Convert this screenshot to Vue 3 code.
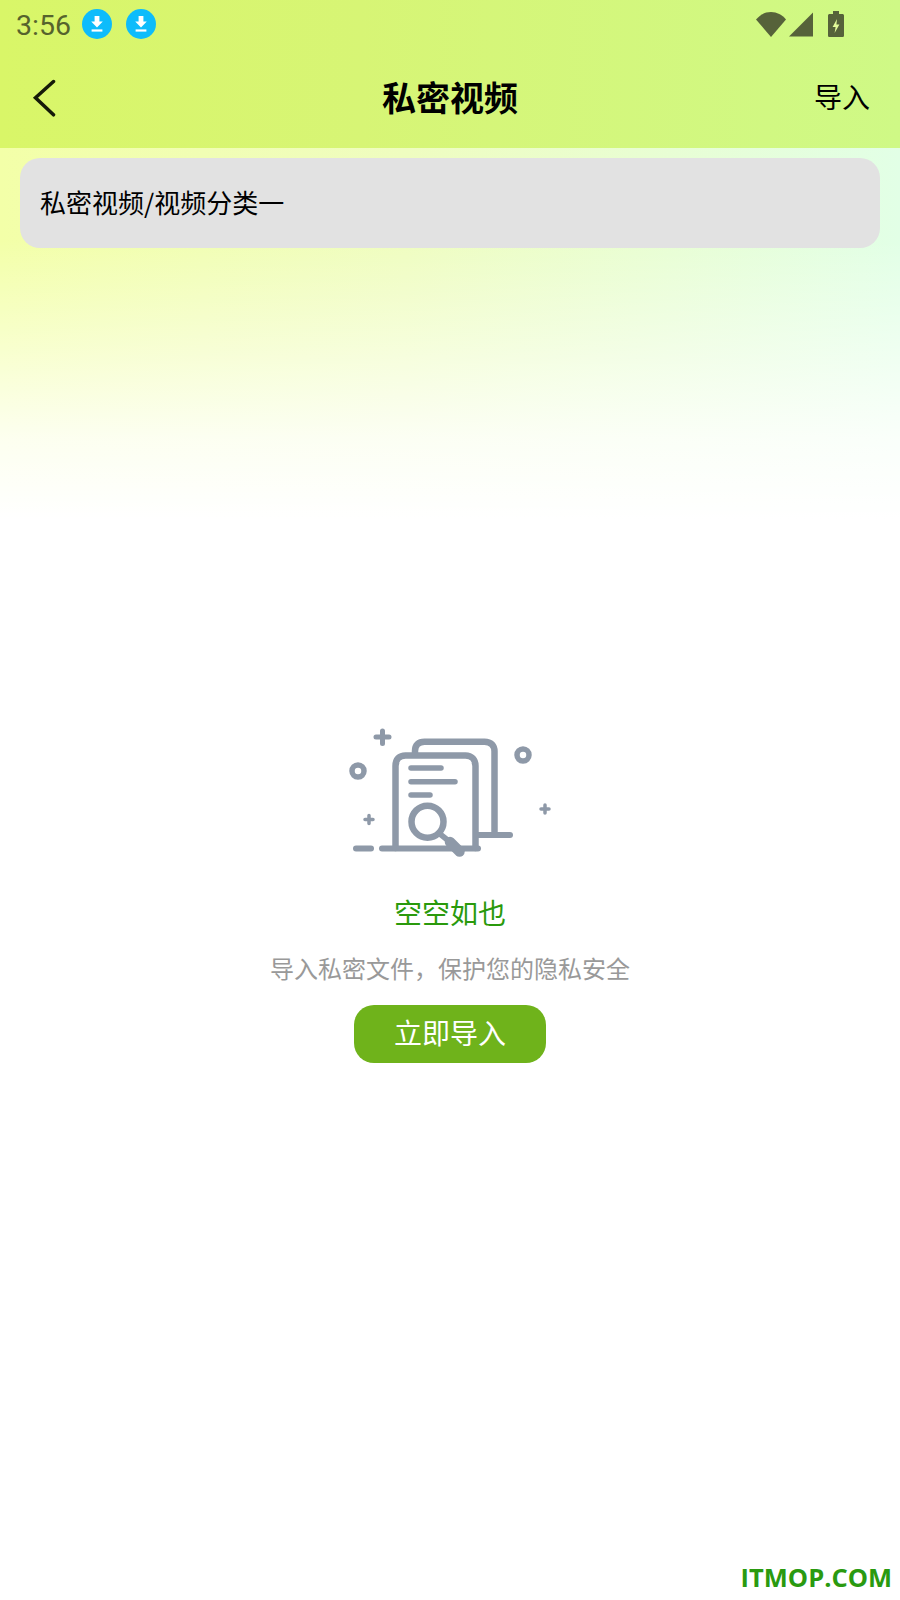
<template>
  <div class="page">
    <header class="app-header">
      <div class="status-bar">
        <span class="time">3:56</span>
        <span v-for="n in 2" :key="n" class="dl-badge">
          <svg width="30" height="30" viewBox="0 0 30 30">
            <circle cx="15" cy="15" r="15" fill="#0dbcfb" />
            <path d="M12.6 7h4.8v5.6h3.4L15 18.4l-5.8-5.8h3.4z" fill="#fff" />
            <rect x="9.6" y="20.4" width="10.8" height="2.2" fill="#fff" />
          </svg>
        </span>
        <div class="status-right">
          <svg width="30" height="25" viewBox="0 0 30 25" class="wifi">
            <path d="M0 7.500C4 2.800 9 0 15 0s11 2.800 15 7.500L15 25z" fill="#56623a" />
          </svg>
          <svg width="24" height="25" viewBox="0 0 24 25" class="signal">
            <path d="M24 0.500V24.500H0z" fill="#56623a" />
          </svg>
          <svg width="16" height="26" viewBox="0 0 16 26" class="battery">
            <path d="M5 0h6v3h3.400c.9 0 1.600.7 1.600 1.600v19.800c0 .9-.7 1.600-1.600 1.600H1.600C.7 26 0 25.300 0 24.400V4.600C0 3.700.7 3 1.600 3H5z" fill="#56623a" />
            <path d="M9 8l-4.400 8h3l-1 6 4.800-8.600H8.400z" fill="#e4fb9a" />
          </svg>
        </div>
      </div>
      <div class="nav-bar">
        <svg class="back" width="26" height="38" viewBox="0 0 26 38">
          <path d="M21.500 2.500L3.500 18.800l18 17" fill="none" stroke="#151a08" stroke-width="3.500" stroke-linecap="round" />
        </svg>
        <h1 class="title">私密视频</h1>
        <a class="import">导入</a>
      </div>
    </header>

    <main class="content">
      <div class="crumb">私密视频/视频分类一</div>

      <section class="empty">
        <svg class="empty-icon" width="220" height="150" viewBox="0 0 220 150">
          <g fill="none" stroke="#8e99a8" stroke-linecap="round" stroke-linejoin="round">
            <path stroke-width="5" d="M36 22h13M42.500 16v12.500" />
            <circle stroke-width="5.500" cx="18" cy="56" r="6" />
            <circle stroke-width="5.500" cx="183" cy="40" r="6" />
            <path stroke-width="3.500" d="M25 104.500h8M29 100.500v8" />
            <path stroke-width="3.500" d="M201 94h8M205 90v8" />
            <path stroke-width="6" d="M16 133.500h15" />
            <path stroke-width="6" d="M42 133.500h96" />
            <path stroke-width="6.500" d="M75 38v-2c0-6 3.500-9.300 9.500-9.300h60c6.500 0 10 3.800 10 9.800v80" />
            <path stroke-width="6" d="M138 120h32" />
            <path stroke-width="6.500" d="M55.500 133V51c0-7 4-10.500 10-10.500h60c6 0 10 4 10 10.500v82" />
            <path stroke-width="5.500" d="M71 53h30" />
            <path stroke-width="5.500" d="M71 66.700h44" />
            <path stroke-width="5.500" d="M71 80h19" />
            <circle stroke-width="6.500" cx="87.500" cy="106.700" r="16" fill="#fff" />
            <path stroke-width="5.500" d="M100 119l10 8" />
            <path stroke-width="10.500" d="M110 127l9.500 9.500" />
          </g>
        </svg>
        <h2 class="empty-title">空空如也</h2>
        <p class="empty-desc">导入私密文件，保护您的隐私安全</p>
        <button class="empty-btn">立即导入</button>
      </section>
    </main>

    <span class="watermark">ITMOP.COM</span>
  </div>
</template>

<script setup>
</script>

<style>
html,
body {
  margin: 0;
  background: #fff;
}
</style>

<style scoped>
.page {
  position: relative;
  width: 900px;
  height: 1600px;
  overflow: hidden;
  background: #fff;
  font-family: "Noto Sans CJK SC", "Noto Sans", sans-serif;
  color: #000;
}
.app-header {
  height: 148px;
  background: linear-gradient(90deg, #d9f668 0%, #d7f575 40%, #cff986 100%);
}
.status-bar {
  height: 48px;
  display: flex;
  align-items: center;
  padding-left: 16px;
  box-sizing: border-box;
}
.time {
  font-family: Roboto, sans-serif;
  font-size: 28.5px;
  padding-top: 3px;
  color: #56632d;
  width: 66px;
}
.dl-badge {
  display: block;
  height: 30px;
  margin-right: 14px;
}
.status-right {
  margin-left: auto;
  display: flex;
  align-items: center;
  gap: 3px;
  padding-right: 56px;
}
.battery {
  margin-left: 12px;
}
.nav-bar {
  position: relative;
  height: 100px;
  display: flex;
  align-items: center;
  justify-content: space-between;
  padding: 0 30px 4px 32px;
  box-sizing: border-box;
}
.back {
  display: block;
  margin-top: 4px;
}
.title {
  position: absolute;
  left: 0;
  right: 0;
  margin: 0;
  text-align: center;
  font-size: 34px;
  font-weight: 700;
  pointer-events: none;
}
.import {
  font-size: 28px;
  color: #000;
}
.content {
  height: 1452px;
  padding: 10px 20px 0;
  box-sizing: border-box;
  background: linear-gradient(180deg, rgba(255, 255, 255, 0) 25%, rgba(255, 255, 255, 0.45) 55%, rgba(255, 255, 255, 0.82) 78%, #fff 100%) 0 0 / 100% 372px no-repeat,
    linear-gradient(90deg, #f3ffa8 0%, #effdc0 45%, #e2ffe6 100%) 0 0 / 100% 372px no-repeat;
}
.crumb {
  height: 90px;
  display: flex;
  align-items: center;
  padding: 0 0 4px 20px;
  box-sizing: border-box;
  border-radius: 20px;
  background: #e2e2e2;
  font-size: 26px;
}
.empty {
  display: flex;
  flex-direction: column;
  align-items: center;
  margin-top: 467px;
}
.empty-icon {
  display: block;
  filter: blur(0.4px);
}
.empty-title {
  margin: 27px 0 0;
  font-size: 28px;
  line-height: 40px;
  font-weight: 400;
  color: #2a9a0c;
}
.empty-desc {
  margin: 19px 0 0;
  font-size: 24px;
  line-height: 34px;
  color: #999;
}
.empty-btn {
  width: 192px;
  height: 58px;
  margin-top: 20px;
  padding: 0 0 4px;
  border: 0;
  border-radius: 20px;
  background: #6fb31b;
  color: #fff;
  font-family: inherit;
  font-size: 28px;
}
.watermark {
  position: absolute;
  right: 8px;
  bottom: 5px;
  font-family: "Open Sans", sans-serif;
  font-weight: 700;
  font-size: 25.5px;
  line-height: 36px;
  color: #2a9a10;
}
</style>
